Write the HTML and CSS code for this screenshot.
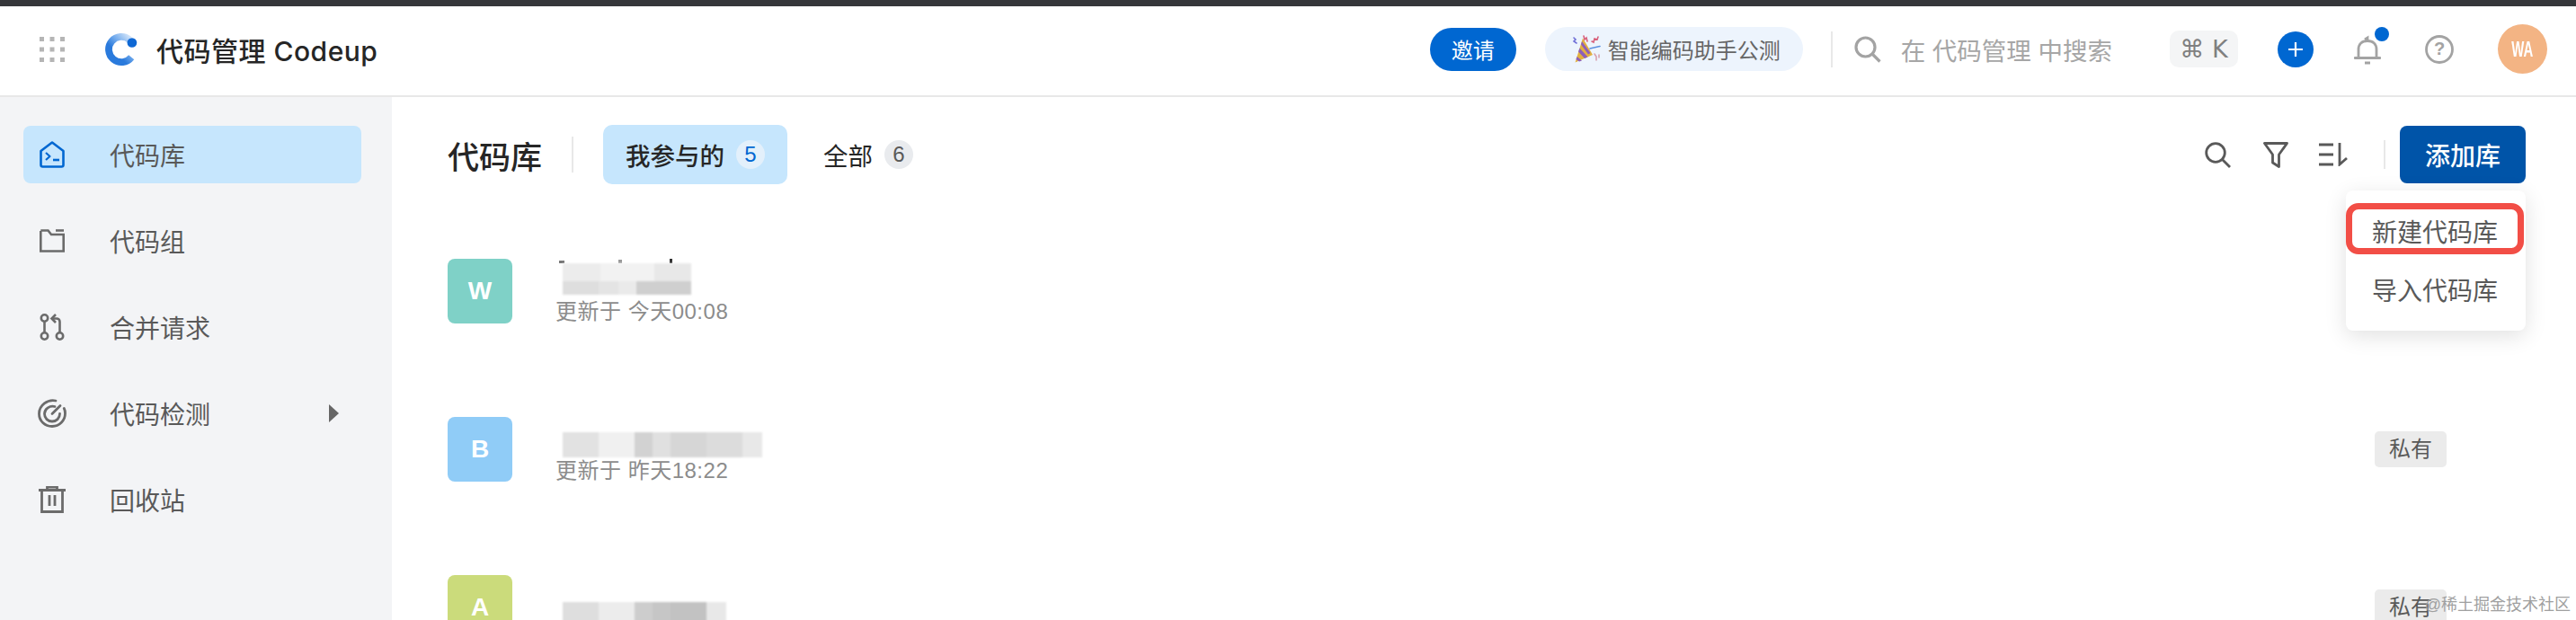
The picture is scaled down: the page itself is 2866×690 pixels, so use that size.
FILE: index.html
```html
<!doctype html>
<html lang="zh-CN">
<head>
	<meta charset="UTF-8">
	<title>代码管理 Codeup</title>
	<link rel="stylesheet" href="styles.css">
</head>
<body>
	<div class="topstrip"></div>

	<header class="header">
		<svg class="waffle" viewBox="0 0 28 28" fill="#b5b5b5">
			<rect x="0" y="0" width="5" height="5"/><rect x="11.500" y="0" width="5" height="5"/><rect x="23" y="0" width="5" height="5"/>
			<rect x="0" y="11.500" width="5" height="5"/><rect x="11.500" y="11.500" width="5" height="5"/><rect x="23" y="11.500" width="5" height="5"/>
			<rect x="0" y="23" width="5" height="5"/><rect x="11.500" y="23" width="5" height="5"/><rect x="23" y="23" width="5" height="5"/>
		</svg>
		<svg class="logo" viewBox="0 0 38 38" fill="none">
			<defs>
				<linearGradient id="logoGrad" gradientUnits="userSpaceOnUse" x1="28" y1="3" x2="10" y2="20">
					<stop offset="0" stop-color="#d3e5fa"/>
					<stop offset="0.6" stop-color="#6ea8ec"/>
					<stop offset="1" stop-color="#2a7adc"/>
				</linearGradient>
			</defs>
			<path d="M28 8A14.500 14.500 0 1 0 30 28" stroke="url(#logoGrad)" stroke-width="8"/>
			<circle cx="30.700" cy="11.300" r="5.500" fill="#0f68d4"/>
		</svg>
		<span class="brand">代码管理 Codeup</span>

		<div class="header-right">
			<button class="invite">邀请</button>
			<div class="promo">
				<svg class="popper" viewBox="0 0 32 32">
					<path d="M3.500 30.500L12 3.500l11 18.500z" fill="#e3b040"/>
					<path d="M5.500 24l5.500 4.500-3 1-3.500-2.500zM8.500 14.500l9 10-3.500 1.500-7-7.500zM11 7l9.500 13-2.500 1.500L10 10.500z" fill="#8d5fb8"/>
					<g fill="none" stroke-width="1.600" stroke-linecap="round">
						<path d="M2 3l2 2-2 2 3 2" stroke="#6f6fd8"/>
						<path d="M13 1l1 4 2-2 1 4" stroke="#d8607c"/>
						<path d="M29 2l-1 3-3-1-1 4-2-1" stroke="#d8607c"/>
						<path d="M20 15l11-2.500" stroke="#5a8fe0"/>
						<path d="M25 21l2 3 0 4M30 22l0 3" stroke="#d8a0b0"/>
					</g>
				</svg>
				<span>智能编码助手公测</span>
			</div>
			<i class="vline vline-head"></i>
			<svg class="search-icon" viewBox="0 0 30 30" fill="none" stroke="#a3a3a3" stroke-width="3.200">
				<circle cx="12.500" cy="12.500" r="10.500"/><path d="M20 20l8.500 8.500"/>
			</svg>
			<span class="search-text">在 代码管理 中搜索</span>
			<span class="kbd">⌘ K</span>
			<span class="plus">
				<svg viewBox="0 0 16 16" stroke="#fff" stroke-width="2.200"><path d="M8 0v16M0 8h16"/></svg>
			</span>
			<span class="bell">
				<svg viewBox="0 0 30 34" fill="none" stroke="#a3a3a3" stroke-width="2.800">
					<path d="M5 26V17C5 11 9 7.500 15 7.500S25 11 25 17v9"/>
					<path d="M1 26.500h28" stroke-linecap="round"/>
					<path d="M15 7.500V4L12 6"/>
					<path d="M12 32h6" stroke-width="3"/>
				</svg>
				<i class="bell-dot"></i>
			</span>
			<svg class="help" viewBox="0 0 32 32">
				<circle cx="16" cy="16" r="14.500" fill="none" stroke="#a3a3a3" stroke-width="2.800"/>
				<text x="16" y="22" text-anchor="middle" class="help-mark">?</text>
			</svg>
			<span class="avatar"><b>WA</b></span>
		</div>
	</header>

	<div class="layout">
		<nav class="sidebar">
			<a class="nav-item active">
				<svg viewBox="0 0 28 30" fill="none" stroke="#0067d1" stroke-width="2.600" stroke-linejoin="round">
					<path d="M1.500 11L14 1.500 26.500 11v15.500a2 2 0 0 1-2 2h-21a2 2 0 0 1-2-2z"/>
					<path d="M7 13l4.500 4L7 21" stroke-width="2.200"/>
					<path d="M15 21h7" stroke-width="2.600"/>
				</svg>
				<span>代码库</span>
			</a>
			<a class="nav-item">
				<svg viewBox="0 0 28 28" fill="none" stroke="#6b6b6b" stroke-width="2.600">
					<path d="M1.300 3v22.500h25.400V7H13L9.500 2.500H1.300"/>
					<path d="M18 2.500h9" stroke-width="2.600"/>
				</svg>
				<span>代码组</span>
			</a>
			<a class="nav-item">
				<svg viewBox="0 0 28 30" fill="none" stroke="#6b6b6b" stroke-width="2.600">
					<circle cx="5.500" cy="5" r="3.700"/><circle cx="5.500" cy="25" r="3.700"/><circle cx="22.500" cy="25" r="3.700"/>
					<path d="M5.500 9v12"/>
					<path d="M22.500 21V9c0-2-1.500-3.500-3.500-3.500h-4"/>
					<path d="M18 1l-4.500 4.500L18 10"/>
				</svg>
				<span>合并请求</span>
			</a>
			<a class="nav-item has-arrow">
				<svg class="radar" viewBox="0 0 32 32" fill="none" stroke="#6b6b6b" stroke-width="2.800" stroke-linecap="round">
					<path d="M20 2C11 0 1.500 7 1.500 16.500 1.500 24.500 8 30.500 16 30.500S30.500 24 30.500 16c0-2-.4-4-1.200-5.500"/>
					<path d="M19 8.500C13.500 7 7.500 11 7.500 16.500c0 5 3.800 8.500 8.500 8.500s8.500-3.500 8.500-8.500"/>
					<path d="M16 16.500L25 7.500"/>
				</svg>
				<span>代码检测</span>
				<i class="arrow"></i>
			</a>
			<a class="nav-item">
				<svg class="trash" viewBox="0 0 30 30" fill="none" stroke="#6b6b6b" stroke-width="2.800">
					<path d="M0 4.500h30M9.500 4.500V1h11v3.500"/>
					<path d="M3.500 4.500v24h23v-24"/>
					<path d="M12 10v12M18 10v12"/>
				</svg>
				<span>回收站</span>
			</a>
		</nav>

		<main class="main">
			<div class="toolbar">
				<h1 class="page-title">代码库</h1>
				<i class="vline vline-title"></i>
				<a class="tab current">我参与的<em class="count">5</em></a>
				<a class="tab">全部<em class="count">6</em></a>

				<div class="tools">
					<svg class="tool tool-search" viewBox="0 0 29 29" fill="none" stroke="#595959" stroke-width="2.800">
						<circle cx="12" cy="12" r="10.300"/><path d="M19.500 19.500l8.500 8.500"/>
					</svg>
					<svg class="tool tool-filter" viewBox="0 0 28 29" fill="none" stroke="#595959" stroke-width="2.800" stroke-linejoin="round">
						<path d="M1.500 1.500h25l-9 12.500v13.500l-7-4.500V14z"/>
					</svg>
					<svg class="tool tool-sort" viewBox="0 0 32 26" fill="none" stroke="#595959" stroke-width="2.800">
						<path d="M0 2h16M0 13h16M0 24h16"/>
						<path d="M23 0v24l8-7"/>
					</svg>
					<i class="vline vline-tools"></i>
					<button class="add-btn">添加库</button>
				</div>

				<div class="menu">
					<a class="menu-item marked">新建代码库</a>
					<a class="menu-item">导入代码库</a>
				</div>
			</div>

			<ul class="repos">
				<li class="repo">
					<span class="repo-icon teal">W</span>
					<div class="repo-info">
						<div class="specks"></div>
						<div class="mosaic mosaic-a"></div>
						<div class="repo-time">更新于 今天00:08</div>
					</div>
				</li>
				<li class="repo">
					<span class="repo-icon blue">B</span>
					<div class="repo-info">
						<div class="mosaic mosaic-b"></div>
						<div class="repo-time">更新于 昨天18:22</div>
					</div>
					<span class="tag">私有</span>
				</li>
				<li class="repo">
					<span class="repo-icon green">A</span>
					<div class="repo-info">
						<div class="mosaic mosaic-c"></div>
					</div>
					<span class="tag">私有</span>
				</li>
			</ul>
		</main>
	</div>

	<div class="watermark">@稀土掘金技术社区</div>
</body>
</html>
```

FILE: styles.css
```css
* { box-sizing: border-box; }
html, body { margin: 0; height: 690px; overflow: hidden; }
body {
	position: relative;
	background: #fff;
	color: #262626;
	font-family: "Liberation Sans", "Noto Sans CJK SC", sans-serif;
}
ul { list-style: none; margin: 0; padding: 0; }
button { border: 0; font-family: inherit; padding: 0; }
svg { display: block; flex: none; }
i, em { font-style: normal; }

.topstrip { height: 7px; background: #36373a; }

.vline { display: block; width: 2px; background: #e8e8e8; flex: none; }

/* header */
.header {
	display: flex;
	align-items: center;
	height: 101px;
	padding: 0 32px 4px 44px;
	border-bottom: 2px solid #e8e8e8;
}
.waffle { width: 28px; height: 28px; }
.logo { width: 37px; height: 38px; margin-left: 45px; }
.brand {
	margin-left: 20px;
	font-family: "Inter", "Noto Sans CJK SC", sans-serif;
	font-size: 30px;
	font-weight: 500;
	letter-spacing: 0.5px;
	color: #262626;
}
.header-right { display: flex; align-items: center; margin-left: auto; }
.invite {
	width: 96px;
	height: 48px;
	border-radius: 24px;
	background: #0067d1;
	color: #fff;
	font-size: 24px;
}
.promo {
	display: flex;
	align-items: center;
	width: 287px;
	height: 49px;
	margin-left: 32px;
	padding-left: 30px;
	border-radius: 25px;
	background: #edf4fd;
	color: #666;
	font-size: 24px;
}
.popper { width: 32px; height: 32px; margin-right: 8px; }
.vline-head { height: 40px; margin-left: 31px; }
.search-icon { width: 30px; height: 30px; margin-left: 24px; }
.search-text { margin-left: 22px; font-size: 27.500px; color: #a6a6a6; white-space: nowrap; }
.kbd {
	width: 76px;
	height: 41px;
	margin-left: 64px;
	border-radius: 10px;
	background: #f4f5f6;
	color: #808080;
	font-family: "DejaVu Sans", sans-serif;
	font-size: 27px;
	line-height: 41px;
	text-align: center;
	white-space: nowrap;
}
.plus {
	display: flex;
	align-items: center;
	justify-content: center;
	width: 40px;
	height: 40px;
	margin-left: 44px;
	border-radius: 50%;
	background: #0067d1;
}
.plus svg { width: 16px; height: 16px; }
.bell { position: relative; width: 30px; height: 34px; margin-left: 45px; }
.bell svg { width: 30px; height: 34px; }
.bell-dot {
	position: absolute;
	top: -8px;
	right: -9px;
	width: 16px;
	height: 16px;
	border-radius: 50%;
	background: #0067d1;
}
.help { width: 32px; height: 32px; margin-left: 49px; }
.help-mark { fill: #a3a3a3; font-size: 20px; font-weight: 700; }
.avatar {
	width: 55px;
	height: 55px;
	margin-left: 49px;
	border-radius: 50%;
	background: #f3b484;
	color: #fff;
	font-size: 24px;
	line-height: 55px;
	text-align: center;
}
.avatar b { display: inline-block; transform: scaleX(0.62); }

/* sidebar */
.layout { display: flex; height: 582px; }
.sidebar {
	display: flex;
	flex-direction: column;
	gap: 32px;
	width: 436px;
	flex: none;
	padding: 32px 34px 0 26px;
	background: #f3f4f6;
}
.nav-item {
	display: flex;
	align-items: center;
	height: 64px;
	padding-left: 18px;
	border-radius: 8px;
	color: #595959;
	font-size: 28px;
}
.nav-item svg { width: 28px; height: 30px; }
.nav-item svg.radar { width: 32px; height: 32px; margin: 0 -2px; }
.nav-item svg.trash { width: 30px; margin: 0 -1px; }
.nav-item span { margin-left: 50px; }
.nav-item.active { background: #c6e6fd; }
.arrow {
	width: 0;
	height: 0;
	margin-left: auto;
	margin-right: 25px;
	border-left: 11px solid #666;
	border-top: 10px solid transparent;
	border-bottom: 10px solid transparent;
}

/* main */
.main { flex: 1; min-width: 0; padding: 31px 56px 0 62px; }
.toolbar { position: relative; display: flex; align-items: center; height: 66px; }
.page-title { margin: 0; font-size: 35px; font-weight: 500; color: #262626; }
.vline-title { height: 40px; margin-left: 33px; }
.tab {
	display: flex;
	align-items: center;
	height: 66px;
	padding: 0 25px 0 25px;
	border-radius: 10px;
	color: #262626;
	font-size: 27.500px;
}
.tab.current { margin-left: 33px; background: #c6e6fd; font-weight: 500; }
.tab + .tab { margin-left: 15px; }
.count {
	width: 32px;
	height: 32px;
	margin-left: 13px;
	border-radius: 50%;
	background: #e9ebee;
	color: #595959;
	font-size: 24px;
	font-weight: 400;
	line-height: 32px;
	text-align: center;
}
.current .count { background: #e3f0fb; color: #0067d1; }
.tools { display: flex; align-items: center; margin-left: auto; }
.tool-search { width: 29px; height: 29px; }
.tool-filter { width: 28px; height: 29px; margin-left: 36px; }
.tool-sort { width: 32px; height: 26px; margin-left: 34px; }
.vline-tools { height: 32px; margin-left: 40px; }
.add-btn {
	width: 140px;
	height: 64px;
	margin-left: 16px;
	border-radius: 8px;
	background: #0054a8;
	color: #fff;
	font-size: 28px;
	font-weight: 500;
}

/* dropdown sits over the list */
.menu {
	position: absolute;
	top: 73px;
	right: 0;
	z-index: 2;
	width: 200px;
	height: 156px;
	padding-top: 14px;
	border-radius: 8px;
	background: #fff;
	box-shadow: 0 6px 24px rgba(0, 0, 0, 0.12);
}
.menu-item {
	display: block;
	width: 198px;
	height: 57px;
	color: #595959;
	font-size: 28px;
	line-height: 59px;
	text-align: center;
}
.menu-item + .menu-item { margin-top: 12px; }
.menu-item.marked { border: 7px solid #f24e46; border-radius: 14px; line-height: 53px; }

/* repo rows */
.repos { display: flex; flex-direction: column; gap: 104px; padding-top: 83px; }
.repo { display: flex; height: 72px; }
.repo-icon {
	width: 72px;
	height: 72px;
	flex: none;
	border-radius: 8px;
	color: #fff;
	font-size: 28px;
	font-weight: 700;
	line-height: 72px;
	text-align: center;
}
.teal { background: #7fd1c7; }
.blue { background: #90ccf7; }
.green { background: #cbdb7b; }
.repo-info { flex: 1; margin-left: 48px; }
.repo-time { color: #8c8c8c; font-size: 24px; letter-spacing: 0.5px; line-height: 30px; }
.tag {
	align-self: center;
	height: 40px;
	margin-right: 88px;
	padding: 0 16px;
	border-radius: 5px;
	background: #ebebeb;
	color: #595959;
	font-size: 24px;
	line-height: 40px;
}
.specks {
	width: 130px;
	height: 5px;
	background:
		linear-gradient(#777, #777) 4px 2px / 6px 3px no-repeat,
		linear-gradient(#999, #999) 70px 1px / 4px 4px no-repeat,
		linear-gradient(#333, #333) 127px 0 / 3px 5px no-repeat;
}
.mosaic { margin-left: 8px; filter: blur(1px); }
.mosaic-a {
	width: 143px;
	height: 35px;
	margin-bottom: 4px;
	background:
		linear-gradient(90deg, #dedede 0 40px, #e4e4e4 40px 62px, #eaeaea 62px 82px, #cfcfcf 82px 143px) 0 20px / 143px 15px no-repeat,
		linear-gradient(90deg, #ececec 0 42px, #f2f2f2 42px 102px, #e8e8e8 102px 143px) 0 0 / 143px 20px no-repeat;
}
.mosaic-b {
	width: 222px;
	height: 28px;
	margin-top: 17px;
	background: linear-gradient(90deg, #e2e2e2 0 40px, #f0f0f0 40px 80px, #d2d2d2 80px 100px, #e0e0e0 100px 120px, #d6d6d6 120px 160px, #dcdcdc 160px 200px, #e8e8e8 200px 222px);
}
.mosaic-c {
	width: 182px;
	height: 42px;
	margin-top: 30px;
	background: linear-gradient(90deg, #dedede 0 40px, #ececec 40px 80px, #cdcdcd 80px 100px, #c6c6c6 100px 120px, #c2c2c2 120px 160px, #e8e8e8 160px 182px);
}

.watermark {
	position: absolute;
	right: 6px;
	bottom: 6px;
	color: #a0a0a0;
	font-size: 18px;
	line-height: 22px;
}
```
